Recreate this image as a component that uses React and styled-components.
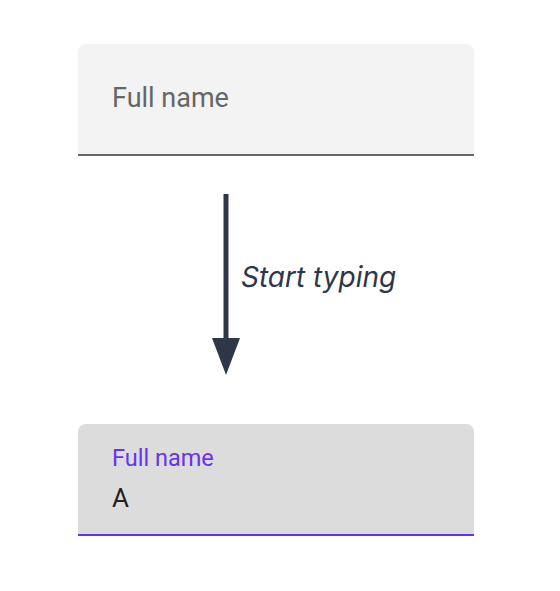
import React from "react";
import styled, { createGlobalStyle } from "styled-components";

const Global = createGlobalStyle`
  html, body { margin: 0; padding: 0; background: #ffffff; }
  body { font-family: Roboto, "Noto Sans", sans-serif; }
`;

const Page = styled.div`
  width: 560px;
  height: 591px;
  box-sizing: border-box;
  padding: 44px 0 0 78px;
  display: flex;
  flex-direction: column;
`;

const Field = styled.div`
  width: 396px;
  height: 112px;
  box-sizing: border-box;
  background: ${(p) => (p.$active ? "#dcdcdc" : "#f3f3f3")};
  border-radius: 8px 8px 0 0;
  border-bottom: 2px solid ${(p) => (p.$active ? "#6633ee" : "#666666")};
  padding: ${(p) => (p.$active ? "21px 34px 0" : "38.5px 34px 0")};
  display: flex;
  flex-direction: column;
`;

const Label = styled.span`
  font-family: Roboto, sans-serif;
  font-size: ${(p) => (p.$small ? "23.5px" : "27px")};
  line-height: ${(p) => (p.$small ? "26px" : "30px")};
  color: ${(p) => (p.$small ? "#6633ee" : "#666666")};
`;

const Value = styled.span`
  font-family: Roboto, sans-serif;
  font-size: 26px;
  line-height: 30px;
  color: #222222;
  margin-top: 12px;
`;

const Transition = styled.div`
  height: 268px;
  box-sizing: border-box;
  padding: 38px 0 0 134px;
  display: flex;
  align-items: flex-start;
`;

const Caption = styled.span`
  font-family: Inter, sans-serif;
  font-style: italic;
  font-size: 28px;
  line-height: 34px;
  color: #2e3748;
  margin: 65.5px 0 0 1px;
`;

const Arrow = () => (
  <svg width="28" height="182" viewBox="0 0 28 182" aria-hidden="true">
    <rect x="11.5" y="0" width="5" height="146" fill="#2e3748" />
    <polygon points="0,144 28,144 14,181" fill="#2e3748" />
  </svg>
);

export default function App() {
  return (
    <>
      <Global />
      <Page>
        <Field>
          <Label>Full name</Label>
        </Field>
        <Transition>
          <Arrow />
          <Caption>Start typing</Caption>
        </Transition>
        <Field $active>
          <Label $small>Full name</Label>
          <Value>A</Value>
        </Field>
      </Page>
    </>
  );
}
